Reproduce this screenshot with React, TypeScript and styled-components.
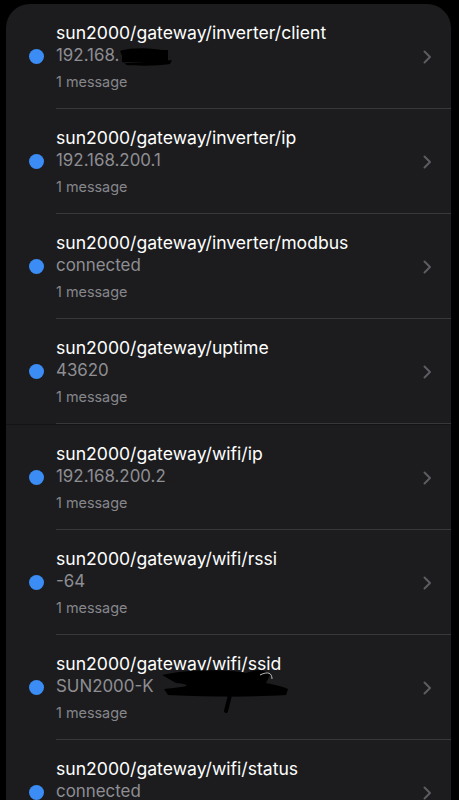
import React from "react";
import styled, { createGlobalStyle } from "styled-components";

const Global = createGlobalStyle`
  html, body { margin: 0; padding: 0; background: #000; }
  body { font-family: Inter, "Noto Sans", "Liberation Sans", sans-serif; -webkit-font-smoothing: antialiased; }
`;

const Page = styled.div`
  background: #000;
  padding: 4px 8px 0 6px;
  box-sizing: border-box;
  overflow: hidden;
  height: 800px;
`;

const Card = styled.div`
  background: #1c1c1e;
  border-radius: 24px 24px 0 0;
  overflow: hidden;
  min-height: 796px;
`;

const Row = styled.div<{ $seam?: boolean }>`
  display: grid;
  grid-template-columns: 50px 1fr 28px;
  align-items: start;
  position: relative;
  border-bottom: ${(p) => (p.$seam ? "1px solid #141416" : "none")};
`;

const DotCell = styled.div`
  padding-top: 45px;
  display: flex;
  justify-content: flex-end;
  padding-right: 12px;
`;

const Dot = styled.span`
  width: 15px;
  height: 15px;
  border-radius: 50%;
  background: #3b8cf5;
  display: block;
`;

const Body = styled.div`
  padding: 18px 0 16px 0;
  border-bottom: 1px solid #38383a;
  position: relative;
`;

const Title = styled.div`
  color: #fff;
  font-size: 17.6px;
  line-height: 22px;
  white-space: nowrap;
`;

const Value = styled.div`
  color: #8e8e93;
  font-size: 16.9px;
  line-height: 23px;
  white-space: nowrap;
  position: relative;
`;

const Meta = styled.div`
  color: #86868b;
  font-size: 14.4px;
  line-height: 20px;
  margin-top: 5px;
`;

const ChevronCell = styled.div`
  padding-top: 46px;
  border-bottom: 1px solid #38383a;
  align-self: stretch;
  display: flex;
  justify-content: flex-start;
`;

const Scribble = styled.svg`
  position: absolute;
  pointer-events: none;
`;

const Chevron = () => (
  <svg width="9" height="14" viewBox="0 0 9 14">
    <path d="M1.5 1.5 L7 7 L1.5 12.5" fill="none" stroke="#5c5c61" strokeWidth="2" strokeLinecap="round" strokeLinejoin="round" />
  </svg>
);

const Redact1 = () => (
  <Scribble width="56" height="22" viewBox="0 0 56 22" style={{ left: 62, top: 1 }}>
    <path d="M2 6 C15 2 35 3 48 6 L50 10 C40 12 20 11 4 14 L6 18 C20 17 38 17 54 15 L52 19 C40 21 20 21 8 20 Z" fill="#000" />
    <rect x="4" y="5" width="46" height="12" fill="#000" />
  </Scribble>
);

const Redact2 = () => (
  <Scribble width="140" height="50" viewBox="0 0 140 50" style={{ left: 100, top: -8 }}>
    <path d="M6 8 C30 2 70 2 90 6 C100 2 110 2 114 8 L110 16 C120 18 128 20 132 22 L130 28 C100 30 60 30 12 28 L8 22 C30 20 40 18 20 16 Z" fill="#000" />
    <path d="M62 22 C70 14 90 12 110 20 L108 26 C90 30 70 30 60 28 Z" fill="#000" />
    <path d="M74 28 L70 44" stroke="#000" strokeWidth="4" strokeLinecap="round" />
    <path d="M104 8 C112 4 116 6 116 12" stroke="#bbb" strokeWidth="1" fill="none" />
  </Scribble>
);

type Item = { topic: string; value: string; redact?: 1 | 2 };

const items: Item[] = [
  { topic: "sun2000/gateway/inverter/client", value: "192.168.", redact: 1 },
  { topic: "sun2000/gateway/inverter/ip", value: "192.168.200.1" },
  { topic: "sun2000/gateway/inverter/modbus", value: "connected" },
  { topic: "sun2000/gateway/uptime", value: "43620" },
  { topic: "sun2000/gateway/wifi/ip", value: "192.168.200.2" },
  { topic: "sun2000/gateway/wifi/rssi", value: "-64" },
  { topic: "sun2000/gateway/wifi/ssid", value: "SUN2000-K", redact: 2 },
  { topic: "sun2000/gateway/wifi/status", value: "connected" },
];

export default function App() {
  return (
    <>
      <Global />
      <Page>
        <Card>
          {items.map((it, i) => (
            <Row key={it.topic} $seam={i === 3}>
              <DotCell>
                <Dot />
              </DotCell>
              <Body>
                <Title>{it.topic}</Title>
                <Value>
                  {it.value}
                  {it.redact === 1 && <Redact1 />}
                  {it.redact === 2 && <Redact2 />}
                </Value>
                <Meta>1 message</Meta>
              </Body>
              <ChevronCell>
                <Chevron />
              </ChevronCell>
            </Row>
          ))}
        </Card>
      </Page>
    </>
  );
}
